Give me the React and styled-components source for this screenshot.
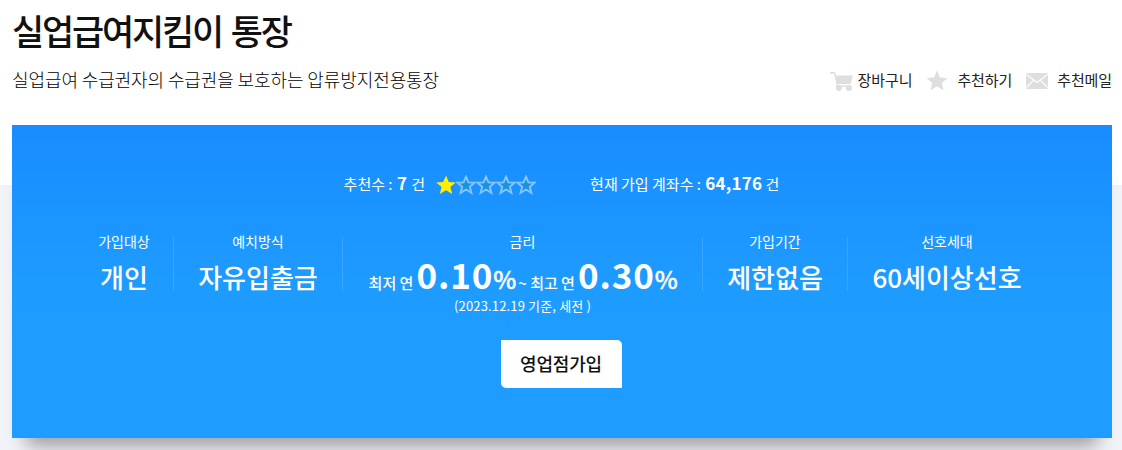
import styled, { createGlobalStyle } from "styled-components"

const GlobalStyle = createGlobalStyle`
    * {
        box-sizing: border-box;
    }
    body {
        margin: 0;
        background: #fff;
        font-family: "Noto Sans CJK KR", "Noto Sans", sans-serif;
        color: #111;
    }
`
const Page = styled.div`
    width: 1122px;
    height: 450px;
    padding: 0 10px 0 12px;
    overflow: hidden;
    background: linear-gradient(#fff 185px, #f2f3f8 185px);
`
const Title = styled.h1`
    margin: 0;
    padding-top: 6px;
    height: 63px;
    font-size: 35px;
    font-weight: 500;
    line-height: 48px;
    letter-spacing: -2.2px;
    word-spacing: 3px;
`
const SubRow = styled.div`
    height: 62px;
    display: flex;
    justify-content: space-between;
`
const Summary = styled.p`
    margin: 0;
    color: #000;
    font-size: 18px;
    font-weight: 300;
    line-height: 32px;
    letter-spacing: -0.1px;
`
const Tools = styled.div`
    display: flex;
    height: 33px;
    align-items: center;
`
const Tool = styled.span`
    display: flex;
    align-items: center;
    gap: ${(props) => props.$gap}px;
    margin-left: ${(props) => props.$left || 0}px;
    color: #222;
    font-size: 15px;
    line-height: 20px;
    letter-spacing: -0.1px;
    white-space: nowrap;

    svg {
        margin-top: 2px;
        fill: #dedede;
    }
`
const Panel = styled.section`
    height: 313px;
    padding: 44px 2px 0 0;
    display: flex;
    flex-direction: column;
    align-items: center;
    color: #fff;
    background: linear-gradient(#188cff, #1e9bff 50%, #1e9dff);
    box-shadow: 0 22px 18px -14px rgba(0, 0, 0, 0.36);
`
const Counts = styled.div`
    display: flex;
    height: 28px;
    padding-left: 1px;
    align-items: center;
    font-size: 15px;
    line-height: 28px;
    white-space: pre;

    b {
        font-size: 17px;
        font-weight: 700;
    }
`
const Total = styled.span`
    b {
        padding-left: 1px;
        letter-spacing: 0.2px;
    }
`
const Recommend = styled.span`
    b {
        padding: 0 1px;
    }
`
const Stars = styled.span`
    display: flex;
    margin: 3px 54px 0 11px;
`
const Specs = styled.div`
    display: flex;
    margin-top: 32px;
    padding-right: 1px;
`
const Spec = styled.div`
    width: ${(props) => props.$width}px;
    height: 91px;
    flex: none;
    display: flex;
    flex-direction: column;
    align-items: center;
    background: linear-gradient(#38a5ff, #38a5ff) right 8px / ${(props) => (props.$last ? 0 : 1)}px 54px no-repeat;
`
const Label = styled.span`
    height: 24px;
    font-size: 14px;
    line-height: 24px;
`
const Value = styled.strong`
    height: 48px;
    font-size: 26px;
    font-weight: 500;
    line-height: 48px;
    white-space: nowrap;
`
const Rate = styled.div`
    height: 44px;
    display: flex;
    align-items: baseline;
    font-size: 15px;
    font-weight: 500;
    line-height: 42px;
    white-space: pre;
`
const Num = styled.b`
    margin-left: 3px;
    font-size: 35px;
    letter-spacing: 0.9px;
`
const Percent = styled.span`
    font-size: 24.5px;
    font-weight: 500;
    letter-spacing: -1.5px;
    -webkit-text-stroke: 0.4px #fff;
`
const Note = styled.span`
    font-size: 13px;
    line-height: 18px;
    letter-spacing: 0.15px;
    white-space: nowrap;
`
const JoinButton = styled.button`
    width: 121px;
    height: 48px;
    margin-top: 20px;
    padding: 0 0 2px;
    border: 0;
    border-radius: 0 5px 0 5px;
    background: #fff;
    color: #111;
    font-family: inherit;
    font-size: 18px;
    font-weight: 500;
    line-height: 46px;
    letter-spacing: -0.2px;
`

const STAR = "M10 0.5 L12.8 7 L19.8 7.4 L14.4 12 L16.2 19 L10 15.2 L3.8 19 L5.6 12 L0.2 7.4 L7.2 7 Z"

const CartIcon = () => (
    <svg width="24" height="20" viewBox="0 0 24 20">
        <path d="M0 1H5L6 4.5H23L20.5 13H8V14.5H20.5V16H6.5V13L4 2.7H0Z" />
        <circle cx="8.8" cy="17" r="3" />
        <circle cx="19" cy="17" r="3" />
    </svg>
)

const StarIcon = () => (
    <svg width="22" height="21" viewBox="0 0 20 19.5">
        <path d={STAR} />
    </svg>
)

const MailIcon = () => (
    <svg width="22" height="16" viewBox="0 0 22 16">
        <rect width="22" height="16" rx="1.5" />
        <path d="M0.5 1.5L11 9.5L21.5 1.5M0.5 14.5L7.8 7.2M21.5 14.5L14.2 7.2" style={{ fill: "none" }} stroke="#fff" strokeWidth="1.2" />
    </svg>
)

const specs = [
    { label: "가입대상", value: "개인", width: 99 },
    { label: "예치방식", value: "자유입출금", width: 169 },
    { label: "금리", width: 360 },
    { label: "가입기간", value: "제한없음", width: 145 },
    { label: "선호세대", value: "60세이상선호", width: 199 },
]

const App = () => {
  return (
    <Page>
        <GlobalStyle />
        <Title>실업급여지킴이 통장</Title>
        <SubRow>
            <Summary>실업급여 수급권자의 수급권을 보호하는 압류방지전용통장</Summary>
            <Tools>
                <Tool $gap={4}><CartIcon />장바구니</Tool>
                <Tool $gap={9} $left={14}><StarIcon />추천하기</Tool>
                <Tool $gap={9} $left={14}><MailIcon />추천메일</Tool>
            </Tools>
        </SubRow>
        <Panel>
            <Counts>
                <Recommend>추천수 : <b>7</b> 건</Recommend>
                <Stars>
                    {[0, 1, 2, 3, 4].map((n) => (
                        <svg key={n} width="20" height="20" viewBox="0 0 20 20">
                            {n === 0
                                ? <path d={STAR} fill="#fff000" />
                                : <path d={STAR} transform="translate(1.3 1.3) scale(.87)" fill="#1a93e0" stroke="#85c5ff" strokeWidth="2.2" />}
                        </svg>
                    ))}
                </Stars>
                <Total>현재 가입 계좌수 : <b>64,176</b> 건</Total>
            </Counts>
            <Specs>
                {specs.map((el, i) => {
                    return <Spec key={el.label} $width={el.width} $last={i === specs.length - 1}>
                        <Label>{el.label}</Label>
                        {el.value && <Value>{el.value}</Value>}
                        {!el.value && <>
                            <Rate>
                                최저 연<Num>0.10</Num><Percent>%</Percent> ~ 최고 연<Num>0.30</Num><Percent>%</Percent>
                            </Rate>
                            <Note>(2023.12.19 기준, 세전 )</Note>
                        </>}
                    </Spec>
                })}
            </Specs>
            <JoinButton>영업점가입</JoinButton>
        </Panel>
    </Page>
  )
}

export default App
